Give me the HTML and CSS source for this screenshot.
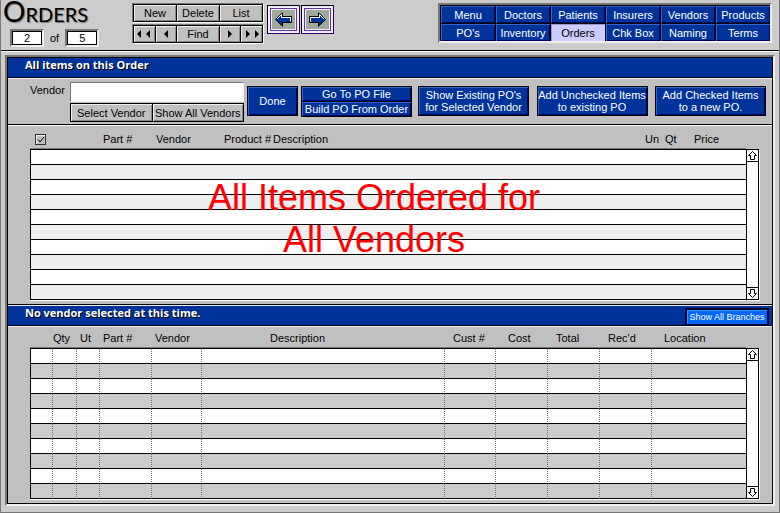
FILE: index.html
```html
<!DOCTYPE html>
<html lang="en">
<head>
    <meta charset="UTF-8">
    <meta name="viewport" content="width=device-width, initial-scale=1.0">
    <title>Orders</title>
    <link rel="stylesheet" href="styles.css">
</head>
<body>

<header class="topbar">
    <div class="heading">
        <h1>Orders</h1>
        <div class="pager">
            <input type="text" class="page-box" value="2" aria-label="Current record">
            <span>of</span>
            <input type="text" class="page-box" value="5" aria-label="Record count">
        </div>
    </div>

    <div class="records">
        <div class="record-row">
            <button type="button" class="btn wide">New</button>
            <button type="button" class="btn wide">Delete</button>
            <button type="button" class="btn wide">List</button>
        </div>
        <div class="record-row">
            <button type="button" class="btn" aria-label="First"><svg width="14" height="8" viewBox="0 0 14 8"><path d="M4 0v8L0 4zM13 0v8L9 4z"/></svg></button>
            <button type="button" class="btn" aria-label="Previous"><svg width="4" height="8" viewBox="0 0 4 8"><path d="M4 0v8L0 4z"/></svg></button>
            <button type="button" class="btn wide">Find</button>
            <button type="button" class="btn" aria-label="Next"><svg width="4" height="8" viewBox="0 0 4 8"><path d="M0 0v8l4-4z"/></svg></button>
            <button type="button" class="btn" aria-label="Last"><svg width="14" height="8" viewBox="0 0 14 8"><path d="M1 0v8l4-4zM10 0v8l4-4z"/></svg></button>
        </div>
    </div>

    <div class="history">
        <button type="button" class="arrow-btn" aria-label="Back">
            <svg width="19" height="15" viewBox="0 0 19 15"><path d="M1.500 7.500L8.500.800v3.700h9v6h-9v3.700z" fill="#003399" stroke="#000"/><path d="M3 7L7.500 2.500v3h9.500M16.500 5.500v4" fill="none" stroke="#fff"/></svg>
        </button>
        <button type="button" class="arrow-btn" aria-label="Forward">
            <svg width="19" height="15" viewBox="0 0 19 15"><path d="M17.500 7.500L10.500.800v3.700h-9v6h9v3.700z" fill="#003399" stroke="#000"/><path d="M16 7L11.500 2.500v3H2M2.500 5.500v4" fill="none" stroke="#fff"/></svg>
        </button>
    </div>

    <nav class="menu">
        <a href="#menu">Menu</a>
        <a href="#doctors">Doctors</a>
        <a href="#patients">Patients</a>
        <a href="#insurers">Insurers</a>
        <a href="#vendors">Vendors</a>
        <a href="#products">Products</a>
        <a href="#pos">PO's</a>
        <a href="#inventory">Inventory</a>
        <a href="#orders" class="current">Orders</a>
        <a href="#chkbox">Chk Box</a>
        <a href="#naming">Naming</a>
        <a href="#terms">Terms</a>
    </nav>
</header>

<main class="panel">
    <div class="bar">
        <h2>All items on this Order</h2>
    </div>

    <div class="controls">
        <label for="vendor">Vendor</label>
        <div class="vendor">
            <input type="text" id="vendor">
            <div class="vendor-buttons">
                <button type="button" class="btn">Select Vendor</button>
                <button type="button" class="btn">Show All Vendors</button>
            </div>
        </div>
        <button type="button" class="blue done">Done</button>
        <div class="stack">
            <button type="button" class="blue">Go To PO File</button>
            <button type="button" class="blue">Build PO From Order</button>
        </div>
        <div class="po-buttons">
            <button type="button" class="blue">Show Existing PO's<br>for Selected Vendor</button>
            <button type="button" class="blue">Add Unchecked Items<br>to existing PO</button>
            <button type="button" class="blue">Add Checked Items<br>to a new PO.</button>
        </div>
    </div>

    <section class="list">
        <table class="items">
            <colgroup>
                <col class="w73"><col class="w53"><col class="w68"><col class="w49"><col><col class="w20"><col class="w29"><col class="w52">
            </colgroup>
            <thead>
                <tr>
                    <th class="check"><input type="checkbox" aria-label="Check all" checked></th>
                    <th>Part #</th>
                    <th>Vendor</th>
                    <th>Product #</th>
                    <th>Description</th>
                    <th>Un</th>
                    <th>Qt</th>
                    <th>Price</th>
                </tr>
            </thead>
            <tbody>
                <tr><td></td><td></td><td></td><td></td><td></td><td></td><td></td><td></td></tr>
                <tr><td></td><td></td><td></td><td></td><td></td><td></td><td></td><td></td></tr>
                <tr><td></td><td></td><td></td><td></td><td></td><td></td><td></td><td></td></tr>
                <tr><td></td><td></td><td></td><td></td><td></td><td></td><td></td><td></td></tr>
                <tr><td></td><td></td><td></td><td></td><td></td><td></td><td></td><td></td></tr>
                <tr><td></td><td></td><td></td><td></td><td></td><td></td><td></td><td></td></tr>
                <tr><td></td><td></td><td></td><td></td><td></td><td></td><td></td><td></td></tr>
                <tr><td></td><td></td><td></td><td></td><td></td><td></td><td></td><td></td></tr>
                <tr><td></td><td></td><td></td><td></td><td></td><td></td><td></td><td></td></tr>
                <tr><td></td><td></td><td></td><td></td><td></td><td></td><td></td><td></td></tr>
            </tbody>
        </table>
        <div class="scroll">
            <button type="button" aria-label="Scroll up"><svg width="11" height="11" viewBox="0 0 11 11"><path d="M5.500 1.500l4 4h-2v4h-4v-4h-2z"/></svg></button>
            <button type="button" aria-label="Scroll down"><svg width="11" height="11" viewBox="0 0 11 11"><path d="M5.500 9.500l-4-4h2v-4h4v4h2z"/></svg></button>
        </div>
        <p class="notice">All Items Ordered for<br>All Vendors</p>
    </section>

    <div class="bar second">
        <h2>No vendor selected at this time.</h2>
        <button type="button" class="branches">Show All Branches</button>
    </div>

    <section class="list branch-list">
        <table class="branch-items">
            <colgroup>
                <col class="w23"><col class="w24"><col class="w23"><col class="w52"><col class="w50"><col><col class="w51"><col class="w52"><col class="w52"><col class="w52"><col class="w94">
            </colgroup>
            <thead>
                <tr>
                    <th></th>
                    <th class="flush">Qty</th>
                    <th>Ut</th>
                    <th>Part #</th>
                    <th>Vendor</th>
                    <th class="desc">Description</th>
                    <th class="mid">Cust #</th>
                    <th class="far">Cost</th>
                    <th class="mid">Total</th>
                    <th class="mid">Rec'd</th>
                    <th class="far">Location</th>
                </tr>
            </thead>
            <tbody>
                <tr><td></td><td></td><td></td><td></td><td></td><td></td><td></td><td></td><td></td><td></td><td></td></tr>
                <tr><td></td><td></td><td></td><td></td><td></td><td></td><td></td><td></td><td></td><td></td><td></td></tr>
                <tr><td></td><td></td><td></td><td></td><td></td><td></td><td></td><td></td><td></td><td></td><td></td></tr>
                <tr><td></td><td></td><td></td><td></td><td></td><td></td><td></td><td></td><td></td><td></td><td></td></tr>
                <tr><td></td><td></td><td></td><td></td><td></td><td></td><td></td><td></td><td></td><td></td><td></td></tr>
                <tr><td></td><td></td><td></td><td></td><td></td><td></td><td></td><td></td><td></td><td></td><td></td></tr>
                <tr><td></td><td></td><td></td><td></td><td></td><td></td><td></td><td></td><td></td><td></td><td></td></tr>
                <tr><td></td><td></td><td></td><td></td><td></td><td></td><td></td><td></td><td></td><td></td><td></td></tr>
                <tr><td></td><td></td><td></td><td></td><td></td><td></td><td></td><td></td><td></td><td></td><td></td></tr>
                <tr><td></td><td></td><td></td><td></td><td></td><td></td><td></td><td></td><td></td><td></td><td></td></tr>
            </tbody>
        </table>
        <div class="scroll">
            <button type="button" aria-label="Scroll up"><svg width="11" height="11" viewBox="0 0 11 11"><path d="M5.500 1.500l4 4h-2v4h-4v-4h-2z"/></svg></button>
            <button type="button" aria-label="Scroll down"><svg width="11" height="11" viewBox="0 0 11 11"><path d="M5.500 9.500l-4-4h2v-4h4v4h2z"/></svg></button>
        </div>
    </section>
</main>

</body>
</html>
```
FILE: styles.css
```css
* {
    box-sizing: border-box;
}

body {
    margin: 0;
    min-height: 100vh;
    border: 1px solid #777;
    border-top: 0;
    background-color: #ccc;
    color: #000;
    font-family: "Liberation Sans", Arial, sans-serif;
    font-size: 11px;
    line-height: 12px;
}

h1, h2, p {
    margin: 0;
}

button, input {
    margin: 0;
    padding: 0;
    border-radius: 0;
    font: inherit;
    color: inherit;
}

button {
    display: flex;
    align-items: center;
    justify-content: center;
    white-space: nowrap;
    cursor: pointer;
}

/* top bar */
.topbar {
    display: flex;
    align-items: flex-start;
    height: 52px;
    padding: 0 7px 0 2px;
    border-bottom: 1px solid #fff;
    box-shadow: inset 0 -1px 0 #000;
}

.heading {
    width: 129px;
}

h1 {
    font-family: Lato, sans-serif;
    font-size: 28px;
    font-weight: 400;
    font-variant: small-caps;
    line-height: 22px;
    text-shadow: 1px 1px 1px #777;
}

.pager {
    display: flex;
    align-items: center;
    gap: 6px;
    padding: 7px 0 0 7px;
}

.page-box {
    width: 34px;
    height: 18px;
    border: 2px solid;
    border-color: #777 #eee #eee #777;
    background-color: #fff;
    box-shadow: inset 0 0 0 1px #000;
    text-align: center;
}

.records {
    display: flex;
    flex-direction: column;
    gap: 1px;
    width: 132px;
    padding-top: 3px;
}

.record-row {
    display: flex;
    height: 20px;
    border: 1px solid;
    border-color: #777 #fff #fff #777;
}

.btn {
    flex: 1 1 22px;
    border: 1px solid #000;
    background-color: #c0c0c0;
    box-shadow: inset 1px 1px 0 #eee, inset -1px -1px 0 #888;
}

.btn + .btn {
    margin-left: -1px;
}

.btn.wide {
    flex-grow: 2;
    flex-basis: 42px;
}

.history {
    display: flex;
    gap: 1px;
    padding: 5px 0 0 3px;
}

.arrow-btn {
    width: 33px;
    height: 29px;
    border: 1px solid;
    border-color: #000 #330066 #330066 #000;
    background-color: #a0a89c;
    box-shadow: inset 0 0 0 2px #eeeeff, inset 0 0 0 3px #663399, inset 0 0 0 4px #eeeeff;
}

.menu {
    display: grid;
    grid-template-columns: repeat(6, 55px);
    grid-auto-rows: 18px;
    margin: 3px 0 0 auto;
    border: 2px solid;
    border-color: #777 #eee #eee #777;
}

.menu a {
    display: flex;
    align-items: center;
    justify-content: center;
    border: 1px solid #000;
    border-width: 1px 0 0 1px;
    background-color: #003399;
    box-shadow: inset 1px 1px 0 #3366cc, inset -1px -1px 0 #000066;
    color: #fff;
    text-decoration: none;
}

.menu .current {
    background-color: #ccccff;
    box-shadow: inset 1px 1px 0 #9999cc;
    color: #000;
}

/* main panel */
.panel {
    margin: 3px 4px 6px 4px;
    border: 2px solid;
    border-color: #777 #eee #eee #777;
    background-color: #c0c0c0;
    outline: 1px solid #000;
    outline-offset: -3px;
    padding: 1px;
}

.bar {
    display: flex;
    justify-content: space-between;
    height: 21px;
    padding-left: 17px;
    border-bottom: 1px solid #eee;
    background-color: #003399;
    box-shadow: inset 0 -1px 0 #000;
}

.bar.second {
    height: 23px;
    border-top: 1px solid #000;
    box-shadow: inset 0 1px 0 #eee, inset 0 -1px 0 #000;
    padding: 1px 3px 0 17px;
}

h2 {
    font-family: "Open Sans", sans-serif;
    font-size: 11px;
    line-height: 13px;
    color: #fff;
    text-shadow: 1px 1px 0 #000;
}

.branches {
    width: 84px;
    height: 18px;
    border: 2px solid #000033;
    background-color: #0066ff;
    box-shadow: inset 1px 1px 0 #3399ff;
    color: #fff;
    font-size: 9px;
    margin-top: 2px;
}

.controls {
    display: flex;
    height: 47px;
    padding: 3px 6px 0 22px;
    border-bottom: 1px solid #fff;
    box-shadow: inset 0 -1px 0 #000;
}

.controls label {
    width: 40px;
    padding-top: 2px;
}

.vendor {
    width: 174px;
}

.vendor input {
    display: block;
    width: 100%;
    height: 20px;
    margin-bottom: 1px;
    border: 1px solid;
    border-color: #777 #eee #eee #777;
    background-color: #fff;
}

.vendor-buttons {
    display: flex;
}

.vendor-buttons .btn {
    flex: 1 1 82px;
    height: 19px;
}

.vendor-buttons .btn + .btn {
    flex-basis: 92px;
}

.blue {
    height: 30px;
    border: 1px solid #000;
    background-color: #003399;
    box-shadow: inset 1px 1px 0 #3366cc, inset -1px -1px 0 #000066;
    color: #fff;
}

.controls > .blue, .stack, .po-buttons {
    margin: 4px 0 0 3px;
}

.done {
    width: 51px;
}

.stack {
    width: 111px;
}

.stack .blue {
    width: 100%;
    height: 16px;
}

.stack .blue + .blue {
    margin-top: -1px;
}

.po-buttons {
    display: flex;
    flex: 1;
    justify-content: space-between;
    padding-left: 3px;
}

.po-buttons .blue {
    width: 111px;
}

/* item lists */
.list {
    position: relative;
    display: grid;
    grid-template-columns: 1fr 13px;
    padding: 3px 13px 4px 22px;
}

.branch-list {
    padding-top: 1px;
}

table {
    width: 100%;
    table-layout: fixed;
    border-spacing: 0;
}

th {
    height: 20px;
    padding: 0;
    font-weight: 400;
    text-align: left;
    white-space: nowrap;
}

td {
    height: 15px;
    padding: 0;
    border-bottom: 1px solid #000;
    background-color: #fff;
}

tbody tr:first-child td {
    height: 16px;
    border-top: 1px solid #000;
    box-shadow: 0 -1px 0 #777;
}

td:first-child {
    border-left: 1px solid #000;
}

tbody tr:last-child td {
    box-shadow: 0 1px 0 #fff;
}

.items tr:nth-child(even) td {
    background-color: #eee;
}

.branch-items tr:nth-child(even) td {
    background-color: #ccc;
}

.branch-items td:not(:last-child) {
    border-right: 1px dotted #777;
}

.check {
    padding-left: 5px;
}

.check input {
    appearance: none;
    display: block;
    width: 11px;
    height: 11px;
    border: 1px solid #333;
    background: #c0c0c0 url("data:image/svg+xml,%3Csvg xmlns='http://www.w3.org/2000/svg' viewBox='0 0 9 9'%3E%3Cpath d='M2 4.500l2 2.500 4-5' fill='none' stroke='%23000'/%3E%3C/svg%3E");
    box-shadow: inset 1px 1px 0 #eee;
}

.branch-items th {
    padding-left: 3px;
}

.branch-items .flush {
    padding-left: 0;
}

.branch-items .mid {
    padding-left: 8px;
}

.branch-items .far {
    padding-left: 12px;
}

.branch-items .desc {
    padding-left: 68px;
}

.w20 { width: 20px; }
.w23 { width: 23px; }
.w24 { width: 24px; }
.w29 { width: 29px; }
.w49 { width: 49px; }
.w50 { width: 50px; }
.w51 { width: 51px; }
.w52 { width: 52px; }
.w53 { width: 53px; }
.w68 { width: 68px; }
.w73 { width: 73px; }
.w94 { width: 94px; }

.scroll {
    display: flex;
    flex-direction: column;
    justify-content: space-between;
    margin-top: 20px;
    border: 1px solid #000;
    background-color: #fff;
    box-shadow: 1px 1px 0 #fff;
}

.scroll button {
    height: 12px;
    border: 0;
    border-bottom: 1px solid #000;
    background-color: #fff;
}

.scroll button:last-child {
    border-top: 1px solid #000;
    border-bottom: 0;
}

.scroll path {
    fill: #fff;
    stroke: #000;
}

.notice {
    position: absolute;
    top: 51px;
    left: 0;
    right: 32px;
    color: #f00;
    font-size: 36px;
    line-height: 42px;
    text-align: center;
}
```
